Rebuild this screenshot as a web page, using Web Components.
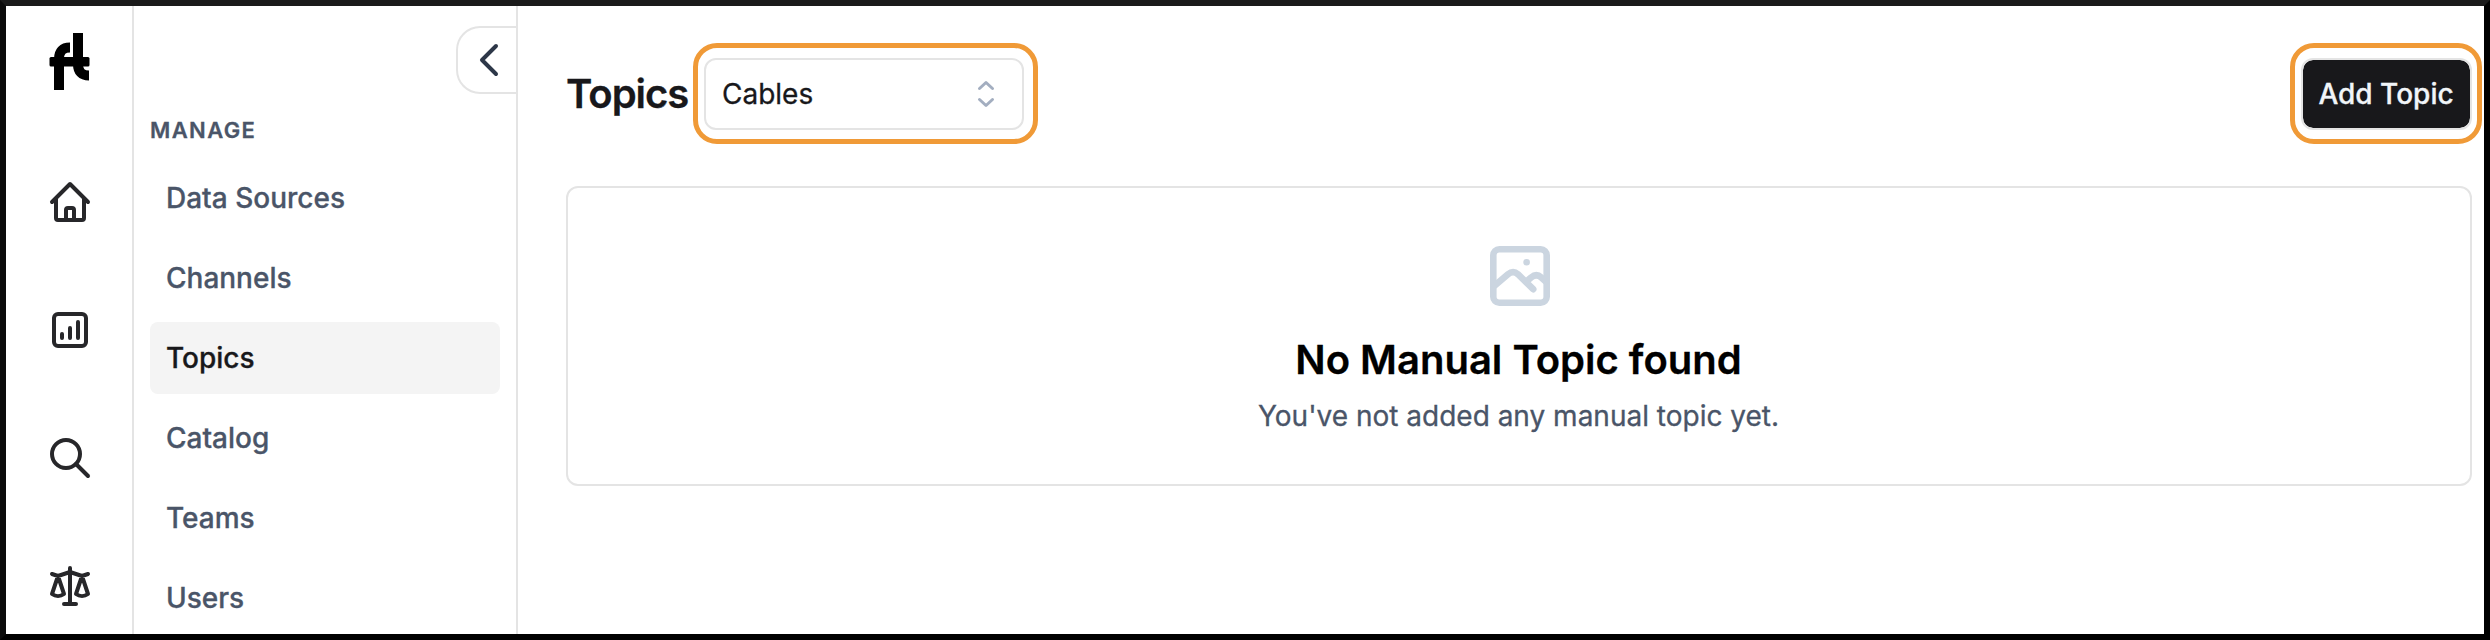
<!DOCTYPE html>
<html lang="en">
<head>
<meta charset="utf-8">
<title>Topics</title>
<style>
html,body{margin:0;height:100%;overflow:hidden}
body{font-family:Inter,"Liberation Sans",sans-serif;font-size:28px;color:#18181b;background:#fff;-webkit-text-stroke:.3px currentColor}
</style>
</head>
<body>
<app-shell>
  <icon-rail slot="rail"></icon-rail>
  <side-nav slot="nav" heading="MANAGE">
    <nav-item>Data Sources</nav-item>
    <nav-item>Channels</nav-item>
    <nav-item active>Topics</nav-item>
    <nav-item>Catalog</nav-item>
    <nav-item>Teams</nav-item>
    <nav-item>Users</nav-item>
  </side-nav>
  <page-header>
    <span slot="title">Topics</span>
    <focus-ring slot="filter"><select-box>Cables</select-box></focus-ring>
    <focus-ring slot="action"><dark-button>Add Topic</dark-button></focus-ring>
  </page-header>
  <empty-state>
    <span slot="title">No Manual Topic found</span>
    You've not added any manual topic yet.
  </empty-state>
</app-shell>
<script>
const define = (name, html) => customElements.define(name, class extends HTMLElement {
  constructor() {
    super();
    const t = document.createElement('template');
    t.innerHTML = html;
    this.attachShadow({mode: 'open'}).append(t.content.cloneNode(true));
  }
  connectedCallback() {
    const h = this.shadowRoot.querySelector('[data-heading]');
    if (h) h.textContent = this.getAttribute('heading');
  }
});

define('app-shell', `
<style>
:host{display:grid;grid-template-columns:128px 384px minmax(0,1fr);box-sizing:border-box;width:100vw;height:100vh;
 border:6px solid;border-color:#1a1a1a #000 #000 #0b0b0b;background:#fff;overflow:hidden}
main{display:flex;flex-direction:column;gap:56px;padding:52px 12px 0 48px;min-width:0}
</style>
<slot name="rail"></slot><slot name="nav"></slot><main><slot></slot></main>`);

define('icon-rail', `
<style>
:host{display:flex;flex-direction:column;align-items:center;border-right:2px solid #e4e4e4;padding:25px 0 0 2px;box-sizing:border-box}
svg{display:block;flex:none}
.logo{margin-bottom:86px}
.i{fill:none;stroke:#27272a;stroke-width:2;stroke-linecap:round;stroke-linejoin:round;margin-bottom:80px}
</style>
<svg class="logo" width="42" height="61" viewBox="48.500 31 42 61"><path fill="none" stroke="#000" stroke-width="10" d="M58.500 90V59Q58.500 47.500 69.500 47.500M77.500 33V64Q77.500 75.500 88.500 75.500"/><rect x="49" y="57" width="40" height="9.500" rx="1.500"/></svg>
<svg class="i" width="48" height="48" viewBox="0 0 24 24"><path d="M3 12l9-9 9 9M5 10.500V20a1 1 0 0 0 1 1h12a1 1 0 0 0 1-1v-9.500M10 21v-5a1 1 0 0 1 1-1h2a1 1 0 0 1 1 1v5"/></svg>
<svg class="i" width="48" height="48" viewBox="0 0 24 24"><rect x="4" y="4" width="16" height="16" rx="2"/><path d="M8 14v2M12 11v5M16 8v8"/></svg>
<svg class="i" width="48" height="48" viewBox="0 0 24 24"><circle cx="10" cy="10" r="7"/><path d="M21 21l-6-6"/></svg>
<svg class="i" width="48" height="48" viewBox="0 0 24 24"><path d="M9 21h6M12 3v18M3 6l3 1 6-2 6 2 3-1M6 7l-3 9a5 5 0 0 0 6 0L6 7M18 7l-3 9a5 5 0 0 0 6 0l-3-9"/></svg>`);

define('side-nav', `
<style>
:host{display:flex;flex-direction:column;border-right:2px solid #e4e4e4;padding-top:20px;box-sizing:border-box;min-width:0}
.toggle{align-self:flex-end;width:60px;height:68px;box-sizing:border-box;border:2px solid #e4e4e4;border-right:0;border-radius:24px 0 0 24px;display:flex;align-items:center;padding-left:20px}
h2{margin:20px 16px 0;font-size:22px;line-height:32px;font-weight:600;letter-spacing:1.400px;color:#4a5568}
nav{display:flex;flex-direction:column;gap:8px;padding:16px 16px 0}
</style>
<div class="toggle"><svg width="24" height="36" viewBox="0 0 24 36" fill="none" stroke="#2d3748" stroke-width="4" stroke-linecap="round" stroke-linejoin="round"><path d="M18 4L4 18l14 14"/></svg></div>
<h2 data-heading></h2>
<nav><slot></slot></nav>`);

define('nav-item', `
<style>
:host{display:flex;align-items:center;height:72px;padding:0 16px;border-radius:8px;font-weight:500;color:#4a5568;box-sizing:border-box;flex:none}
:host([active]){background:#f4f4f4;color:#18181b}
</style><slot></slot>`);

define('page-header', `
<style>
:host{display:flex;align-items:center;height:72px}
h1{margin:0;font-size:40px;line-height:48px;font-weight:600;letter-spacing:-1px;width:138px;white-space:nowrap}
.gap{flex:1}
</style>
<h1><slot name="title"></slot></h1><slot name="filter"></slot><div class="gap"></div><slot name="action"></slot>`);

define('focus-ring', `
<style>
:host{display:block;position:relative}
i{position:absolute;box-sizing:border-box;inset:-15px -14px -14px -11px;border:5px solid #f09a37;border-radius:24px;pointer-events:none}
:host([slot=action]) i{right:-10px}
</style><slot></slot><i></i>`);

define('select-box', `
<style>
:host{display:flex;align-items:center;justify-content:space-between;width:320px;height:72px;box-sizing:border-box;border:2px solid #e4e4e4;border-radius:12px;padding:0 26px 0 16px}
</style><slot></slot>
<svg width="20" height="30" viewBox="0 0 20 30" fill="none" stroke="#a3aec0" stroke-width="3" stroke-linecap="round" stroke-linejoin="round"><path d="M3.500 9.500L10 3.500l6.500 6M3.500 20.500l6.500 6 6.500-6"/></svg>`);

define('dark-button', `
<style>
:host{display:flex;align-items:center;justify-content:center;width:171px;height:72px;box-sizing:border-box;border:2px solid #e4e4e4;border-radius:12px;background:#18181b;background-clip:padding-box;color:#f1f5f9;font-weight:500;white-space:nowrap;padding-right:1px}
</style><slot></slot>`);

define('empty-state', `
<style>
:host{display:flex;flex-direction:column;align-items:center;height:300px;box-sizing:border-box;border:2px solid #e4e4e4;border-radius:12px;padding:52px 1px 0 0}
svg{display:block;margin-left:3px}
h2{margin:20px 0 0;font-size:40px;line-height:56px;font-weight:600;color:#000}
p{margin:8px 0 0;line-height:40px;color:#4a5568}
</style>
<svg width="72" height="72" viewBox="0 0 24 24" fill="none" stroke="#cbd5e0" stroke-width="2.200" stroke-linecap="round" stroke-linejoin="round"><rect x="3.100" y="3.100" width="17.800" height="17.800" rx="2"/><path d="M14.200 7.400h.01M3.600 15.200L8 11.400c1.200-1 2.200-1 3.300 0l5.100 5M14.900 13.200l.8-.7c1.200-1 2.300-1 3.400 0l1.400 1.300"/></svg>
<h2><slot name="title"></slot></h2><p><slot></slot></p>`);
</script>
</body>
</html>
